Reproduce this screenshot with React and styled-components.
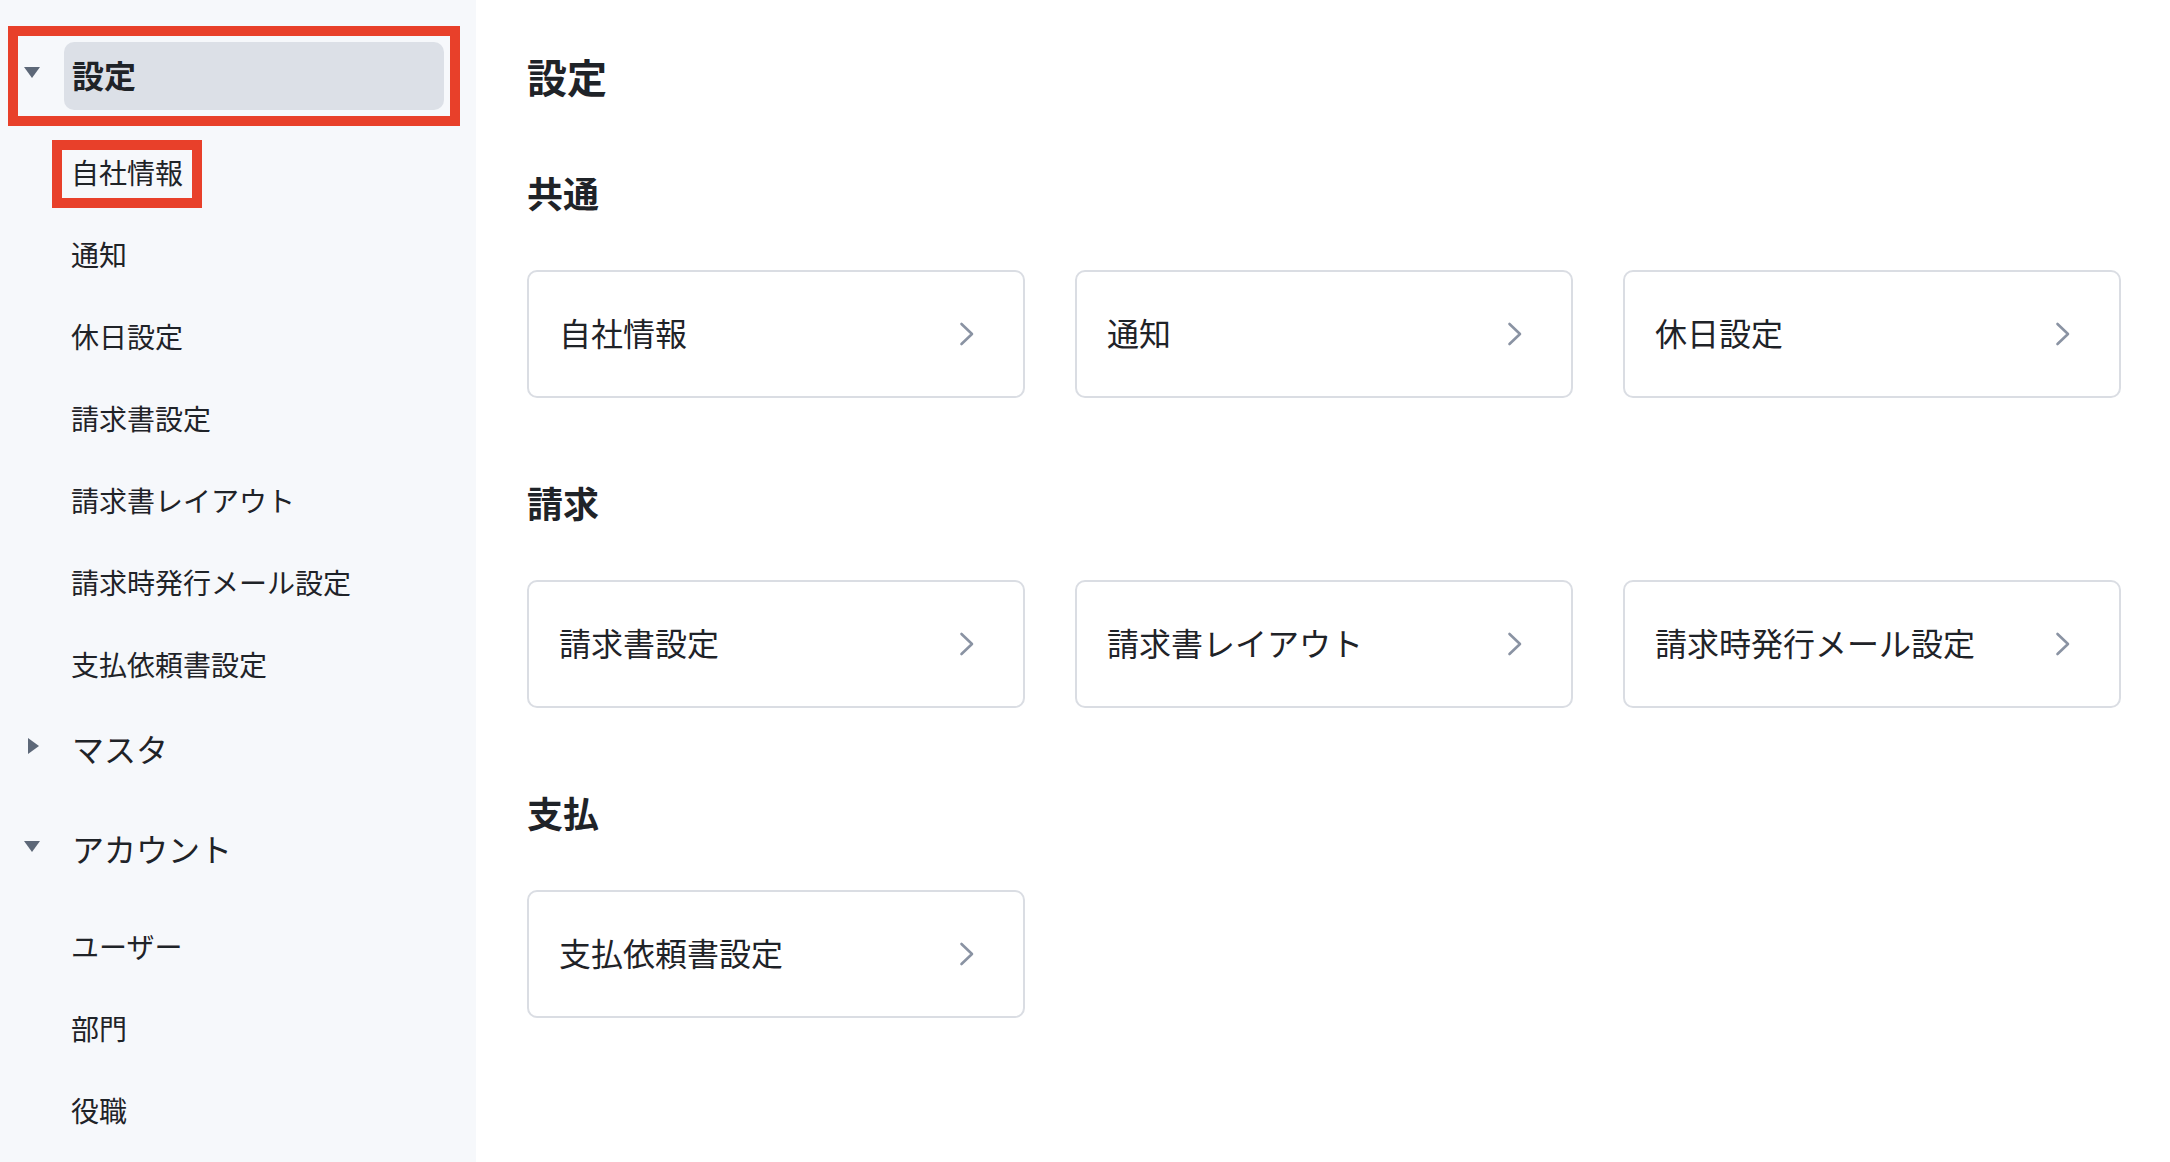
import styled, { createGlobalStyle } from 'styled-components'

// #region styles
const GlobalStyle = createGlobalStyle`
  * {
    box-sizing: border-box;
  }

  body {
    margin: 0;
    font-family: "Noto Sans CJK JP", "Noto Sans", sans-serif;
    color: #1f2328;
    background: #fff;
  }
`

const Layout = styled.div`
  display: flex;
  min-height: 100vh;
`

const Sidebar = styled.nav`
  width: 476px;
  flex-shrink: 0;
  background: #f6f8fb;
  padding: 36px 26px 0 18px;
  display: flex;
  flex-direction: column;
  gap: 20px;
`

const Section = styled.div`
  display: flex;
  flex-direction: column;
  gap: 34px;
`

const SectionHeader = styled.div`
  display: flex;
  align-items: center;
  padding: 6px 6px 6px 0;
  outline: ${(p) => (p.$marked ? '10px solid #e8402a' : 'none')};
`

const CaretBox = styled.span`
  width: 46px;
  flex-shrink: 0;
  display: flex;
  padding-left: 5px;
  margin-bottom: 8px;
`

const HeaderLabel = styled.div`
  flex: 1;
  height: 68px;
  display: flex;
  align-items: center;
  padding: 0 0 4px 8px;
  border-radius: 10px;
  font-size: 32px;
  font-weight: ${(p) => (p.$active ? 700 : 400)};
  background: ${(p) => (p.$active ? '#dce0e7' : 'transparent')};
`

const ItemList = styled.div`
  display: flex;
  flex-direction: column;
  align-items: flex-start;
  gap: 34px;
  padding-left: 44px;
`

const Item = styled.a`
  display: block;
  height: 48px;
  line-height: 44px;
  padding: 0 9px;
  font-size: 28px;
  color: #1f2328;
  text-decoration: none;
  outline: ${(p) => (p.$marked ? '10px solid #e8402a' : 'none')};
`

const Main = styled.main`
  flex: 1;
  padding: 48px 49px 40px 51px;
  display: flex;
  flex-direction: column;
`

const Title = styled.h1`
  margin: 0 0 64px;
  font-size: 40px;
  line-height: 56px;
  font-weight: 700;
`

const Groups = styled.div`
  display: flex;
  flex-direction: column;
  gap: 80px;
`

const Group = styled.section`
  display: flex;
  flex-direction: column;
  gap: 54px;
`

const GroupTitle = styled.h2`
  margin: 0;
  font-size: 36px;
  line-height: 48px;
  font-weight: 700;
`

const CardGrid = styled.div`
  display: grid;
  grid-template-columns: repeat(3, 1fr);
  gap: 50px;
`

const Card = styled.a`
  height: 128px;
  display: flex;
  align-items: center;
  justify-content: space-between;
  padding: 0 48px 4px 30px;
  border: 2px solid #dadde3;
  border-radius: 10px;
  background: #fff;
  font-size: 32px;
  color: #1f2328;
  text-decoration: none;
`

const ChevronIcon = styled.svg`
  margin-top: 4px;
  flex-shrink: 0;
`
// #endregion

const Caret = ({ open }) => (
  <svg width="18" height="18" viewBox="0 0 18 18">
    {open ? (
      <path d="M1 4 L17 4 L9 15 Z" fill="#5d6878" />
    ) : (
      <path d="M5 1 L16 9 L5 17 Z" fill="#5d6878" />
    )}
  </svg>
)

const Chevron = () => (
  <ChevronIcon width="16" height="24" viewBox="0 0 16 24" fill="none">
    <path
      d="M2.5 2 L13 12 L2.5 22"
      stroke="#8a93a3"
      strokeWidth="2.6"
      strokeLinecap="round"
      strokeLinejoin="round"
    />
  </ChevronIcon>
)

const nav = [
  {
    label: '設定',
    open: true,
    active: true,
    items: ['自社情報', '通知', '休日設定', '請求書設定', '請求書レイアウト', '請求時発行メール設定', '支払依頼書設定'],
  },
  { label: 'マスタ', open: false, items: [] },
  { label: 'アカウント', open: true, items: ['ユーザー', '部門', '役職'] },
]

const groups = [
  { title: '共通', cards: ['自社情報', '通知', '休日設定'] },
  { title: '請求', cards: ['請求書設定', '請求書レイアウト', '請求時発行メール設定'] },
  { title: '支払', cards: ['支払依頼書設定'] },
]

export default function App() {
  return (
    <>
      <GlobalStyle />
      <Layout>
        <Sidebar>
          {nav.map((section) => (
            <Section key={section.label}>
              <SectionHeader $marked={section.active}>
                <CaretBox>
                  <Caret open={section.open} />
                </CaretBox>
                <HeaderLabel $active={section.active}>{section.label}</HeaderLabel>
              </SectionHeader>
              {section.open && section.items.length > 0 && (
                <ItemList>
                  {section.items.map((item) => (
                    <Item key={item} $marked={item === '自社情報'}>
                      {item}
                    </Item>
                  ))}
                </ItemList>
              )}
            </Section>
          ))}
        </Sidebar>

        <Main>
          <Title>設定</Title>
          <Groups>
            {groups.map((group) => (
              <Group key={group.title}>
                <GroupTitle>{group.title}</GroupTitle>
                <CardGrid>
                  {group.cards.map((card) => (
                    <Card key={card}>
                      <span>{card}</span>
                      <Chevron />
                    </Card>
                  ))}
                </CardGrid>
              </Group>
            ))}
          </Groups>
        </Main>
      </Layout>
    </>
  )
}
